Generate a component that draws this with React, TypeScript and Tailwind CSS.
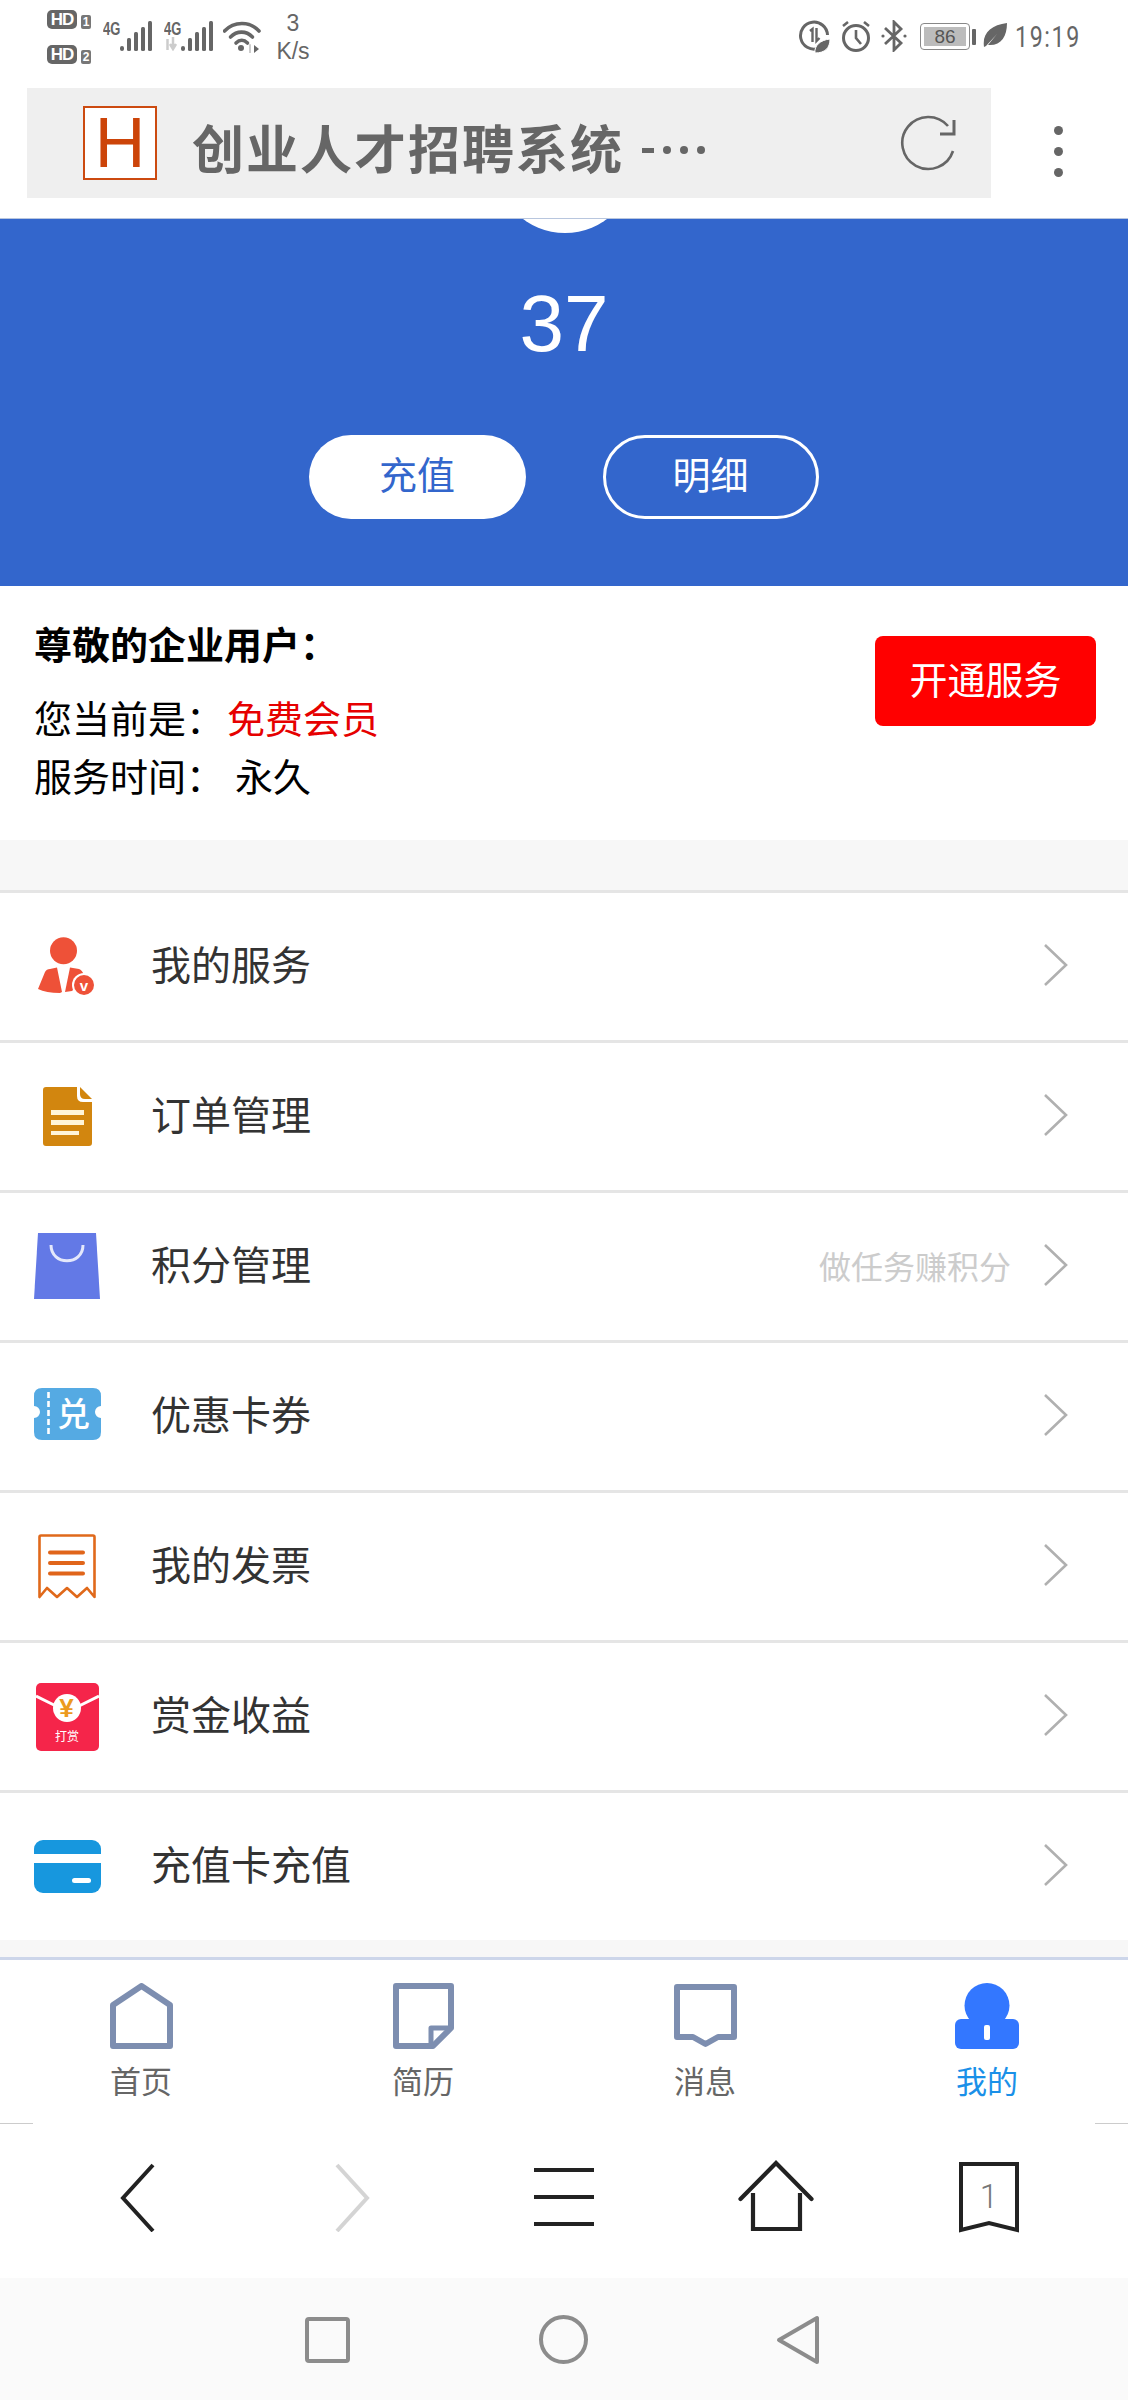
import React from "react";

const CJK = "font-['Noto_Sans_CJK_SC','Noto_Sans',sans-serif]";

function HD({ n }: { n: string }) {
  return (
    <div className="flex items-end h-[20px]">
      <div className="w-[30px] h-[19px] rounded-[5px] bg-[#666] text-white text-[17px] leading-[19px] font-bold text-center font-['Liberation_Sans',sans-serif] tracking-[-1px]">HD</div>
      <div className="ml-[4px] w-[10px] h-[14px] rounded-[2px] bg-[#777] text-white text-[12px] leading-[14px] font-bold text-center font-['Liberation_Sans',sans-serif]">{n}</div>
    </div>
  );
}

function Bars() {
  return (
    <svg width="32" height="30" viewBox="0 0 32 30" fill="#666">
      <rect x="0" y="25" width="4" height="5" rx="2" />
      <rect x="7" y="17" width="4" height="13" rx="1.5" />
      <rect x="14" y="11" width="4" height="19" rx="1.5" />
      <rect x="21" y="6" width="4" height="24" rx="1.5" />
      <rect x="28" y="0" width="4" height="30" rx="1.5" />
    </svg>
  );
}

function Signal({ arrows }: { arrows?: boolean }) {
  return (
    <div className="relative w-[49px] h-[30px]">
      <div className="absolute left-0 top-[1px] text-[#666] text-[18px] leading-[15px] font-bold font-['Liberation_Sans',sans-serif] scale-x-[0.72] origin-left">4G</div>
      {arrows && (
        <div className="absolute left-0 top-[15px]">
          <svg width="14" height="15" viewBox="0 0 14 15" stroke="#ccc" strokeWidth="2.5" fill="none">
            <path d="M3.5 14V3" />
            <path d="M9 1V12" />
            <path d="M6 8l3 5 3-5" fill="#ccc" />
          </svg>
        </div>
      )}
      <div className="absolute right-0 top-0"><Bars /></div>
    </div>
  );
}

function Wifi() {
  return (
    <svg width="38" height="32" viewBox="0 0 38 32" fill="none" stroke="#666" strokeWidth="3.6" strokeLinecap="round">
      <path d="M1.5 10C11 0 27 0 36 10" />
      <path d="M7.5 16C14 9.5 23 9.5 29.5 16" />
      <path d="M13 22C16.5 18.5 21 18.5 24.5 22" />
      <circle cx="18" cy="27" r="3" fill="#666" stroke="none" />
      <path d="M27 24v8" stroke="#ccc" strokeWidth="2" />
      <path d="M31 24l5 4-5 4z" fill="#666" stroke="none" />
    </svg>
  );
}

function DataIcon() {
  return (
    <svg width="32" height="33" viewBox="0 0 32 33" fill="none">
      <path d="M20 28.5A13.5 13.5 0 1 1 29.5 15" stroke="#666" strokeWidth="3" />
      <path d="M12 11l2.5-2v13M18.5 8v13l3-3" stroke="#666" strokeWidth="2.4" />
      <path d="M17 33c-1-7 5-13 15-14 0 9-5 14-15 14z" fill="#666" stroke="#fff" strokeWidth="1" />
    </svg>
  );
}

function Alarm() {
  return (
    <svg width="30" height="32" viewBox="0 0 30 32" fill="none" stroke="#666" strokeWidth="3">
      <circle cx="15" cy="18" r="12.5" />
      <path d="M15 10v8l5 6" strokeWidth="2.6" />
      <path d="M2 6l5-4M28 6l-5-4" strokeWidth="2.6" />
    </svg>
  );
}

function Bt() {
  return (
    <svg width="26" height="32" viewBox="0 0 26 32" fill="none" stroke="#666" strokeWidth="2.8">
      <path d="M4 8l16 15-7 7V2l7 7L4 24" />
      <circle cx="2" cy="16" r="1.6" fill="#666" stroke="none" />
      <circle cx="24" cy="16" r="1.6" fill="#666" stroke="none" />
    </svg>
  );
}

function Leaf({ size }: { size: number }) {
  return (
    <svg width={size} height={size} viewBox="0 0 24 24">
      <path d="M1 24C-1 10 8 2 24 0c0 14-6 23-19 22l9-11-11 12z" fill="#666" />
    </svg>
  );
}

function StatusBar() {
  return (
    <div className="h-[88px] flex shrink-0 text-[#666]">
      <div className="ml-[47px] mt-[9px] w-[56px] flex flex-col gap-[15px]">
        <HD n="1" />
        <HD n="2" />
      </div>
      <div className="mt-[21px] w-[61px]"><Signal /></div>
      <div className="mt-[21px] w-[59px]"><Signal arrows /></div>
      <div className="mt-[21px]"><Wifi /></div>
      <div className="ml-[13px] mt-[9px] w-[38px] flex flex-col items-center font-['Liberation_Sans',sans-serif] text-[23px] leading-[28px]">
        <span>3</span>
        <span>K/s</span>
      </div>
      <div className="ml-[486px] mt-[20px]"><DataIcon /></div>
      <div className="ml-[11px] mt-[20px]"><Alarm /></div>
      <div className="ml-[10px] mt-[20px]"><Bt /></div>
      <div className="ml-[13px] mt-[23px] flex items-center h-[27px]">
        <div className="w-[50px] h-[27px] rounded-[4px] border-[1.5px] border-[#888] p-[3px]">
          <div className="w-full h-full bg-[#bcbcbc] text-[#555] text-[19px] leading-[19px] text-center font-['Liberation_Sans',sans-serif]">86</div>
        </div>
        <div className="ml-[2px] w-[4px] h-[16px] rounded-[1px] bg-[#666]" />
      </div>
      <div className="ml-[7px] mt-[23px]"><Leaf size={24} /></div>
      <div className="ml-[8px] mt-[19px] text-[29px] leading-[36px] font-['Roboto',sans-serif] font-normal tracking-[2px] scale-x-[0.8] origin-left">19:19</div>
    </div>
  );
}

function UrlBar() {
  return (
    <div className="h-[130px] shrink-0 flex">
      <div className="ml-[27px] w-[964px] h-[110px] bg-[#efefef] flex items-center relative">
        <div className="ml-[56px] w-[74px] h-[74px] mt-[-1px] bg-white border-[2.5px] border-[#cc4a10] flex items-center justify-center text-[#cc4409] text-[70px] leading-[70px] font-['Liberation_Sans',sans-serif]">H</div>
        <div className={`ml-[35px] mt-[8px] text-[#666] text-[52px] leading-[60px] font-bold tracking-[2px] ${CJK}`}>创业人才招聘系统</div>
        <div className="ml-[18px] mt-[14px] flex items-center gap-[9px]">
          <span className="w-[12px] h-[5px] bg-[#666]" />
          <span className="w-[8px] h-[8px] rounded-full bg-[#666]" />
          <span className="w-[8px] h-[8px] rounded-full bg-[#666]" />
          <span className="w-[8px] h-[8px] rounded-full bg-[#666]" />
        </div>
        <svg className="ml-auto mr-[34px] mt-[-1px]" width="58" height="58" viewBox="0 0 58 58" fill="none" stroke="#666" strokeWidth="2.6">
          <path d="M54 37A26 26 0 1 1 49 12" />
          <path d="M55 6V20H41" strokeWidth="3" />
        </svg>
      </div>
      <div className="ml-[63px] mt-[38px] flex flex-col gap-[12px]">
        <span className="w-[9px] h-[9px] rounded-full bg-[#666]" />
        <span className="w-[9px] h-[9px] rounded-full bg-[#666]" />
        <span className="w-[9px] h-[9px] rounded-full bg-[#666]" />
      </div>
    </div>
  );
}

function Balance() {
  return (
    <div className="relative h-[368px] shrink-0 bg-[#3366cc] overflow-hidden border-t border-t-[#b8c6de] flex flex-col items-center">
      <div className="absolute left-[495px] top-[-126px] w-[140px] h-[140px] rounded-full bg-white" />
      <div className="mt-[59px] text-white text-[80px] leading-[92px] font-['Liberation_Sans',sans-serif]">37</div>
      <div className="mt-[65px] flex gap-[77px] ml-[-1px]">
        <div className={`w-[217px] h-[84px] rounded-full bg-white text-[#3366cc] text-[38px] flex items-center justify-center pb-[10px] ${CJK}`}>充值</div>
        <div className={`w-[216px] h-[84px] rounded-full border-[3px] border-white text-white text-[38px] flex items-center justify-center pb-[10px] ${CJK}`}>明细</div>
      </div>
    </div>
  );
}

function Info() {
  return (
    <div className={`relative h-[254px] shrink-0 bg-white pl-[34px] ${CJK} text-black text-[38px]`}>
      <div className="pt-[30px] h-[86px] leading-[54px] font-bold">尊敬的企业用户：</div>
      <div className="mt-[16px] h-[58px] leading-[58px]">您当前是：<span className="ml-[3px] text-[#e60000]">免费会员</span></div>
      <div className="h-[58px] leading-[58px]">服务时间：<span className="ml-[11px]">永久</span></div>
      <div className="absolute left-[875px] top-[50px] w-[221px] h-[90px] rounded-[8px] bg-[#ff0000] text-white text-[38px] flex items-center justify-center pb-[8px]">开通服务</div>
    </div>
  );
}

function PersonIcon() {
  return (
    <svg width="58" height="60" viewBox="0 0 58 60">
      <circle cx="25.5" cy="13.7" r="13.5" fill="#ee5138" />
      <path d="M0 52L7 35Q8.5 32 12 32L19 30.5L24 55L22 56Q8 56 0 52Z" fill="#ee5138" />
      <path d="M27 55L32 30.5L41 32Q44 33 46 38L40 48L34 54Z" fill="#ee5138" />
      <circle cx="46" cy="48" r="12" fill="#fff" />
      <circle cx="46" cy="48" r="10" fill="#ee5138" />
      <text x="46" y="53.5" textAnchor="middle" fontSize="15" fontWeight="700" fill="#fff" fontFamily="Liberation Sans">v</text>
    </svg>
  );
}

function DocIcon() {
  return (
    <svg width="49" height="59" viewBox="0 0 49 59">
      <path d="M3 0H34V9Q34 15 40 15H49V56Q49 59 46 59H3Q0 59 0 56V3Q0 0 3 0Z" fill="#d2860f" />
      <path d="M37 0L49 12H42Q37 12 37 7Z" fill="#d2860f" />
      <rect x="8" y="23" width="33" height="5" fill="#fff4d8" />
      <rect x="8" y="33" width="33" height="5" fill="#fff4d8" />
      <rect x="8" y="44" width="28" height="4" fill="#fff4d8" />
    </svg>
  );
}

function BagIcon() {
  return (
    <svg width="66" height="67" viewBox="0 0 66 67">
      <path d="M4 0H62L66 66H0Z" fill="#6379e6" />
      <path d="M17 12C17 33 49 33 49 12" fill="none" stroke="#e4e8fb" strokeWidth="3" />
    </svg>
  );
}

function TicketIcon() {
  return (
    <div className="relative w-[67px] h-[52px] mt-[-5px]">
      <svg width="67" height="52" viewBox="0 0 67 52" className="absolute inset-0">
        <path d="M8 0H59Q67 0 67 8V18A6 6 0 0 0 67 30V44Q67 52 59 52H8Q0 52 0 44V30A6 6 0 0 0 0 18V8Q0 0 8 0Z" fill="#55aae3" />
        <path d="M14.5 4V49" stroke="#fff" strokeWidth="2.6" strokeDasharray="6 3" />
      </svg>
      <div className={`absolute left-[22px] top-[1px] w-[36px] text-center text-white text-[33px] leading-[46px] font-medium ${CJK}`}>兑</div>
    </div>
  );
}

function ReceiptIcon() {
  return (
    <svg width="58" height="66" viewBox="0 0 58 66" fill="none">
      <path d="M1.5 63V3Q1.5 1.5 3 1.5H55Q56.5 1.5 56.5 3V63L49 54L39 63L29 54L19 63L9 54Z" stroke="#e0691b" strokeWidth="2.6" strokeLinejoin="round" />
      <path d="M12 18.5H45M12 29H45M12 39.5H45" stroke="#e0651a" strokeWidth="4" strokeLinecap="round" />
    </svg>
  );
}

function EnvelopeIcon() {
  return (
    <div className={`relative w-[63px] h-[68px] rounded-[5px] bg-[#f5254a] overflow-hidden ${CJK}`}>
      <svg width="63" height="68" viewBox="0 0 63 68" className="absolute inset-0">
        <path d="M0 13L20 23M43 23L63 13" stroke="#fff" strokeWidth="3" />
        <circle cx="31" cy="25" r="14" fill="#fff" />
      </svg>
      <div className="absolute left-[17px] top-[11px] w-[28px] text-center text-[#ec9a1e] text-[26px] leading-[28px] font-bold font-['Liberation_Sans',sans-serif]">¥</div>
      <div className="absolute left-0 right-0 top-[44px] text-center text-white text-[12px] leading-[18px]">打赏</div>
    </div>
  );
}

function CardIcon() {
  return (
    <svg width="67" height="53" viewBox="0 0 67 53">
      <rect width="67" height="53" rx="9" fill="#1797de" />
      <rect y="14" width="67" height="9" fill="#fff" />
      <rect x="38" y="38" width="19" height="5" rx="2.5" fill="#fff" />
    </svg>
  );
}

function Chevron() {
  return (
    <svg width="24" height="42" viewBox="0 0 24 42" fill="none" stroke="#b0b0b0" strokeWidth="2.6">
      <path d="M1 1L22 21L1 41" />
    </svg>
  );
}

const rows: { label: string; icon: React.ReactNode; hint?: string }[] = [
  { label: "我的服务", icon: <PersonIcon /> },
  { label: "订单管理", icon: <DocIcon /> },
  { label: "积分管理", icon: <BagIcon />, hint: "做任务赚积分" },
  { label: "优惠卡券", icon: <TicketIcon /> },
  { label: "我的发票", icon: <ReceiptIcon /> },
  { label: "赏金收益", icon: <EnvelopeIcon /> },
  { label: "充值卡充值", icon: <CardIcon /> },
];

function Menu() {
  return (
    <div className={`bg-[#f7f7f7] h-[1117px] shrink-0 pt-[50px] ${CJK}`}>
      {rows.map((r) => (
        <div key={r.label} className="h-[150px] bg-white border-t-[3px] border-t-[#e5e5e5] flex items-center">
          <div className="w-[151px] pl-[33px] pr-[50px]">
            <div className="w-[68px] flex justify-center">{r.icon}</div>
          </div>
          <div className="text-[#333] text-[40px] leading-[50px] mb-[8px]">{r.label}</div>
          <div className="ml-auto flex items-center mb-[4px]">
            {r.hint && <div className="text-[#ccc] text-[32px] mr-[33px]">{r.hint}</div>}
            <div className="mr-[60px]"><Chevron /></div>
          </div>
        </div>
      ))}
    </div>
  );
}

function TabIcon({ kind }: { kind: string }) {
  if (kind === "home")
    return (
      <svg width="63" height="66" viewBox="0 0 63 66" fill="none" stroke="#7d8eb0" strokeWidth="6" strokeLinejoin="round">
        <path d="M31.5 3L60 22V63H3V22Z" />
      </svg>
    );
  if (kind === "doc")
    return (
      <svg width="61" height="66" viewBox="0 0 61 66" fill="none" stroke="#7d8eb0" strokeWidth="6" strokeLinejoin="round">
        <path d="M3 3H58V45L40 63H3Z" />
        <path d="M38 63V45H58" strokeWidth="5" />
      </svg>
    );
  if (kind === "msg")
    return (
      <svg width="63" height="66" viewBox="0 0 63 66" fill="none" stroke="#7d8eb0" strokeWidth="6" strokeLinejoin="round">
        <path d="M3 4H60V54H44L31.5 61L19 54H3Z" />
      </svg>
    );
  return (
    <svg width="64" height="66" viewBox="0 0 64 66">
      <circle cx="32" cy="22.5" r="22.5" fill="#3377ff" />
      <rect y="36" width="64" height="30" rx="6" fill="#3377ff" />
      <rect x="29" y="42" width="6" height="15" rx="2" fill="#fff" />
    </svg>
  );
}

const tabs = [
  { kind: "home", label: "首页" },
  { kind: "doc", label: "简历" },
  { kind: "msg", label: "消息" },
  { kind: "me", label: "我的" },
];

function TabBar() {
  return (
    <div className={`h-[166px] shrink-0 bg-white border-t-[3px] border-t-[#cdd6ea] ${CJK}`}>
      <div className="grid grid-cols-4 pt-[23px]">
        {tabs.map((t) => (
          <div key={t.label} className="flex flex-col items-center">
            <div className="h-[66px] flex items-center"><TabIcon kind={t.kind} /></div>
            <div className={`mt-[9px] text-[31px] leading-[44px] ${t.kind === "me" ? "text-[#1a90e8]" : "text-[#666]"}`}>{t.label}</div>
          </div>
        ))}
      </div>
    </div>
  );
}

function BrowserNav() {
  return (
    <div className="h-[155px] shrink-0 bg-white relative">
      <div className="flex justify-between h-px">
        <div className="w-[33px] bg-[#ccc]" />
        <div className="w-[33px] bg-[#ccc]" />
      </div>
      <div className="flex items-start pt-[38px] pl-[119px]">
        <svg width="36" height="70" viewBox="0 0 36 70" fill="none" stroke="#222" strokeWidth="4">
          <path d="M34 3L4 36L34 69" />
        </svg>
        <svg className="ml-[180px]" width="36" height="70" viewBox="0 0 36 70" fill="none" stroke="#d4d4d4" strokeWidth="4">
          <path d="M2 3L32 36L2 69" />
        </svg>
        <div className="ml-[163px] mt-[6px] w-[60px] flex flex-col gap-[23px]">
          <span className="h-[4px] bg-[#222]" />
          <span className="h-[4px] bg-[#222]" />
          <span className="h-[4px] bg-[#222]" />
        </div>
        <svg className="ml-[144px] mt-[-2px]" width="76" height="72" viewBox="0 0 76 72" fill="none" stroke="#222" strokeWidth="4.2">
          <path d="M2.5 39L38 3L73.500 39" strokeLinecap="round" />
          <path d="M15 33V69H62V33" />
        </svg>
        <div className="relative ml-[145px] w-[60px] h-[72px]">
          <svg width="60" height="72" viewBox="0 0 60 72" fill="none" stroke="#222" strokeWidth="4">
            <path d="M2 2H58V68L30 61L2 68Z" />
          </svg>
          <div className="absolute inset-x-0 top-[15px] text-center text-[#777] text-[33px] leading-[40px] font-['Roboto',sans-serif] font-light">1</div>
        </div>
      </div>
    </div>
  );
}

function SystemNav() {
  return (
    <div className="h-[123px] shrink-0 bg-[#fafafa] flex items-center pl-[305px]">
      <div className="w-[45px] h-[46px] rounded-[4px] border-[4px] border-[#8c8c8c]" />
      <div className="ml-[189px] w-[49px] h-[49px] rounded-full border-[4px] border-[#8c8c8c]" />
      <svg className="ml-[188px]" width="44" height="50" viewBox="0 0 44 50" fill="none" stroke="#8c8c8c" strokeWidth="4" strokeLinejoin="round">
        <path d="M41 3V47L3 25Z" />
      </svg>
    </div>
  );
}

export default function App() {
  return (
    <div className="w-[1128px] h-[2400px] bg-white flex flex-col overflow-hidden">
      <StatusBar />
      <UrlBar />
      <Balance />
      <Info />
      <Menu />
      <TabBar />
      <BrowserNav />
      <SystemNav />
    </div>
  );
}
